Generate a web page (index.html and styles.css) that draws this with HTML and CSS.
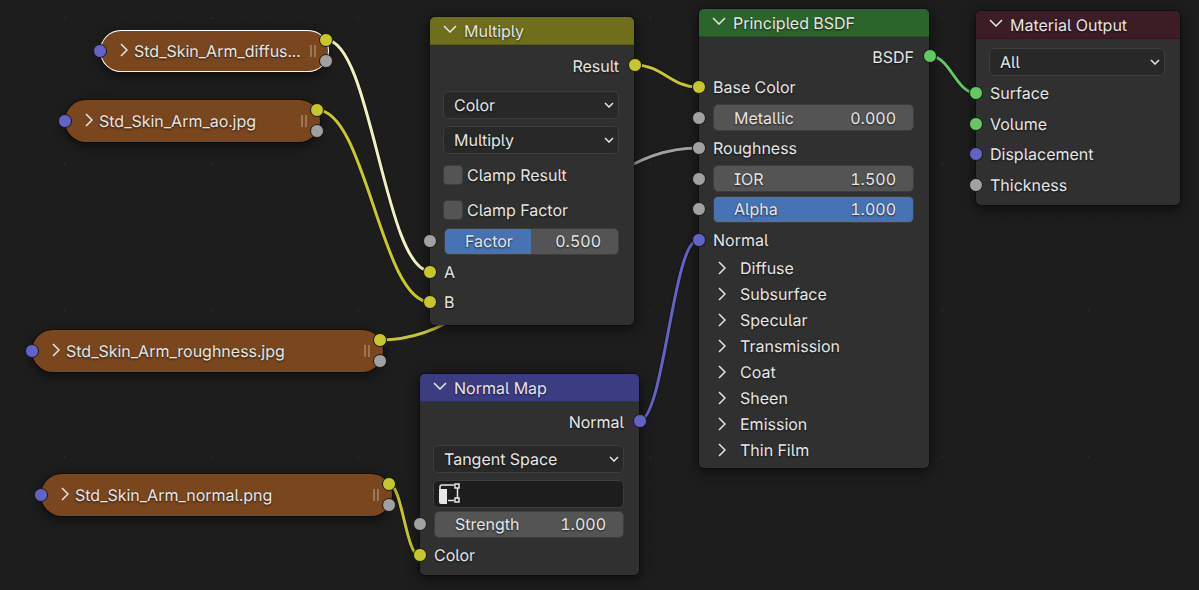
FILE: index.html
```html
<!DOCTYPE html>
<html lang="en">
<head>
<meta charset="utf-8">
<title>Shader Editor</title>
<link rel="stylesheet" href="styles.css">
</head>
<body>
<svg class="defs" aria-hidden="true">
  <symbol id="down" viewBox="0 0 14 8"><path d="M1 1l6 6 6-6"/></symbol>
  <symbol id="right" viewBox="0 0 8 14"><path d="M1 1l6 6-6 6"/></symbol>
  <symbol id="caret" viewBox="0 0 10 6"><path d="M1 1l4 4 4-4"/></symbol>
</svg>
<main class="canvas">
  <svg class="backdrop" aria-hidden="true">
    <defs>
      <pattern id="minor" x="6" y="18" width="29.25" height="29.25" patternUnits="userSpaceOnUse"><rect width="1" height="1" fill="#242424"/></pattern>
      <pattern id="major" x="64" y="17" width="146.25" height="146.25" patternUnits="userSpaceOnUse"><rect width="2" height="2" fill="#272727"/></pattern>
      <linearGradient id="fade" gradientUnits="userSpaceOnUse" x1="380" y1="0" x2="698" y2="0"><stop offset=".3" stop-color="#c7c729"/><stop offset=".8" stop-color="#a1a1a1"/></linearGradient>
    </defs>
    <rect width="100%" height="100%" fill="url(#minor)"/>
    <rect width="100%" height="100%" fill="url(#major)"/>
    <g class="link-edges">
      <path d="M326 40C371 40 385 271 430 271"/>
      <path d="M317 110C366 110 381 302 430 302"/>
      <path d="M380 340C515 340 563 148 698 148"/>
      <path d="M389 484C402 484 406 555 419 555"/>
      <path d="M635 65C662 65 671 87 698 87"/>
      <path d="M639 421C664 421 673 240 698 240"/>
      <path d="M930 56C950 56 956 93 976 93"/>
    </g>
    <g class="links">
      <path stroke="#f0f0c0" d="M326 40C371 40 385 271 430 271"/>
      <path stroke="#c7c729" d="M317 110C366 110 381 302 430 302"/>
      <path stroke="url(#fade)" d="M380 340C515 340 563 148 698 148"/>
      <path stroke="#c7c729" d="M389 484C402 484 406 555 419 555"/>
      <path stroke="#c7c729" d="M635 65C662 65 671 87 698 87"/>
      <path stroke="#6363c7" d="M639 421C664 421 673 240 698 240"/>
      <path stroke="#63c763" d="M930 56C950 56 956 93 976 93"/>
    </g>
  </svg>

  <article class="pill pill-diffuse selected">
    <i class="socket vector in"></i>
    <button class="pill-title"><svg class="right"><use href="#right"/></svg><span>Std_Skin_Arm_diffus...</span></button>
    <span class="grip"></span>
    <span class="outs"><i class="socket color"></i><i class="socket value"></i></span>
  </article>
  <article class="pill pill-ao">
    <i class="socket vector in"></i>
    <button class="pill-title"><svg class="right"><use href="#right"/></svg><span>Std_Skin_Arm_ao.jpg</span></button>
    <span class="grip"></span>
    <span class="outs"><i class="socket color"></i><i class="socket value"></i></span>
  </article>
  <article class="pill pill-roughness">
    <i class="socket vector in"></i>
    <button class="pill-title"><svg class="right"><use href="#right"/></svg><span>Std_Skin_Arm_roughness.jpg</span></button>
    <span class="grip"></span>
    <span class="outs"><i class="socket color"></i><i class="socket value"></i></span>
  </article>
  <article class="pill pill-normal">
    <i class="socket vector in"></i>
    <button class="pill-title"><svg class="right"><use href="#right"/></svg><span>Std_Skin_Arm_normal.png</span></button>
    <span class="grip"></span>
    <span class="outs"><i class="socket color"></i><i class="socket value"></i></span>
  </article>

  <article class="node node-multiply">
    <button class="header"><svg class="down"><use href="#down"/></svg><span>Multiply</span></button>
    <div class="row output">Result<i class="socket color out"></i></div>
    <div class="stack">
      <label class="dropdown"><select aria-label="Data type"><option>Color</option></select><svg class="caret"><use href="#caret"/></svg></label>
      <label class="dropdown"><select aria-label="Blending mode"><option>Multiply</option></select><svg class="caret"><use href="#caret"/></svg></label>
      <label class="check"><input type="checkbox">Clamp Result</label>
      <label class="check"><input type="checkbox">Clamp Factor</label>
    </div>
    <div class="sockets">
      <div class="row"><i class="socket value in"></i><label class="field half"><span>Factor</span><input type="text" value="0.500"></label></div>
      <div class="row"><i class="socket color in"></i>A</div>
      <div class="row"><i class="socket color in"></i>B</div>
    </div>
  </article>

  <article class="node node-normal-map">
    <button class="header"><svg class="down"><use href="#down"/></svg><span>Normal Map</span></button>
    <div class="row output">Normal<i class="socket vector out"></i></div>
    <div class="stack">
      <label class="dropdown"><select aria-label="Space"><option>Tangent Space</option></select><svg class="caret"><use href="#caret"/></svg></label>
      <label class="picker">
        <svg class="uv" viewBox="0 0 22 22"><path class="solid" d="M0 6h8v15H2a2 2 0 0 1-2-2z"/><path d="M1 6V4a2 2 0 0 1 2-2h12M18.500 5v11M9 17.500h6"/><path d="M16 1h4v4h-4zM16 15h4v4h-4z"/></svg>
        <input type="text" aria-label="UV map">
      </label>
    </div>
    <div class="sockets">
      <div class="row"><i class="socket value in"></i><label class="field"><span>Strength</span><input type="text" value="1.000"></label></div>
      <div class="row"><i class="socket color in"></i>Color</div>
    </div>
  </article>

  <article class="node node-principled">
    <button class="header"><svg class="down"><use href="#down"/></svg><span>Principled BSDF</span></button>
    <div class="row output">BSDF<i class="socket shader out"></i></div>
    <div class="sockets">
      <div class="row"><i class="socket color in"></i>Base Color</div>
      <div class="row"><i class="socket value in"></i><label class="field"><span>Metallic</span><input type="text" value="0.000"></label></div>
      <div class="row"><i class="socket value in"></i>Roughness</div>
      <div class="row"><i class="socket value in"></i><label class="field"><span>IOR</span><input type="text" value="1.500"></label></div>
      <div class="row"><i class="socket value in"></i><label class="field full"><span>Alpha</span><input type="text" value="1.000"></label></div>
      <div class="row"><i class="socket vector in"></i>Normal</div>
    </div>
    <div class="panels">
      <button class="panel"><svg class="right"><use href="#right"/></svg>Diffuse</button>
      <button class="panel"><svg class="right"><use href="#right"/></svg>Subsurface</button>
      <button class="panel"><svg class="right"><use href="#right"/></svg>Specular</button>
      <button class="panel"><svg class="right"><use href="#right"/></svg>Transmission</button>
      <button class="panel"><svg class="right"><use href="#right"/></svg>Coat</button>
      <button class="panel"><svg class="right"><use href="#right"/></svg>Sheen</button>
      <button class="panel"><svg class="right"><use href="#right"/></svg>Emission</button>
      <button class="panel"><svg class="right"><use href="#right"/></svg>Thin Film</button>
    </div>
  </article>

  <article class="node node-output">
    <button class="header"><svg class="down"><use href="#down"/></svg><span>Material Output</span></button>
    <div class="stack">
      <label class="dropdown"><select aria-label="Target"><option>All</option></select><svg class="caret"><use href="#caret"/></svg></label>
    </div>
    <div class="sockets">
      <div class="row"><i class="socket shader in"></i>Surface</div>
      <div class="row"><i class="socket shader in"></i>Volume</div>
      <div class="row"><i class="socket vector in"></i>Displacement</div>
      <div class="row"><i class="socket value in"></i>Thickness</div>
    </div>
  </article>
</main>
</body>
</html>
```
FILE: styles.css
```css
* { box-sizing: border-box; }

body {
  margin: 0;
  background: #1d1d1d;
  color: #e6e6e6;
  font: 16px/20px Inter, "Liberation Sans", sans-serif;
  font-feature-settings: "cv05", "cv08", "tnum";
  text-rendering: geometricPrecision;
  text-shadow: 0 1px 2px rgba(0, 0, 0, .7);
}

button, input, select {
  margin: 0;
  padding: 0;
  border: 0;
  background: none;
  color: inherit;
  font: inherit;
  font-feature-settings: inherit;
  text-rendering: inherit;
  text-shadow: inherit;
  text-align: left;
  appearance: none;
}

.defs { position: absolute; width: 0; height: 0; }
.canvas { position: relative; min-height: 100vh; overflow: hidden; }
.backdrop { position: absolute; inset: 0; width: 100%; height: 100%; }
.links, .link-edges { fill: none; stroke-width: 3px; }
.link-edges { stroke: #151515; stroke-width: 5px; }

.down, .right, .caret { flex: none; fill: none; stroke: #e6e6e6; stroke-width: 1.5px; overflow: visible; }
.down { width: 14px; height: 8px; }
.right { width: 8px; height: 14px; }
.caret { width: 10px; height: 6px; }

/* Sockets */
.socket { display: block; width: 14px; height: 14px; border: 1px solid #171717; border-radius: 50%; }
.socket.in { position: absolute; left: -7px; top: 50%; margin-top: -7px; }
.socket.out { position: absolute; right: -8px; top: 50%; margin-top: -8px; }
.color { background: #c7c729; }
.value { background: #a1a1a1; }
.vector { background: #6363c7; }
.shader { background: #63c763; }

/* Collapsed nodes */
.pill {
  position: absolute;
  display: flex;
  align-items: center;
  height: 42px;
  padding: 0 13px 0 20px;
  border-radius: 21px;
  background: #79461d;
  box-shadow: 0 0 0 1px rgba(0, 0, 0, .35), 0 3px 12px rgba(0, 0, 0, .6);
}
.pill.selected { box-shadow: inset 0 0 0 1px #fff, 0 3px 12px rgba(0, 0, 0, .6); }
.pill-title { display: flex; align-items: center; flex: 1; gap: 6px; }
.pill-title svg { margin-bottom: 3px; }
.grip { width: 6px; height: 12px; border: solid #9a7657; border-width: 0 2px; }
.outs { position: absolute; right: -4px; top: 3px; display: grid; gap: 7px; }
.pill-diffuse { left: 100px; top: 30px; width: 229px; }
.pill-ao { left: 65px; top: 100px; width: 255px; }
.pill-roughness { left: 32px; top: 330px; width: 351px; }
.pill-normal { left: 41px; top: 474px; width: 351px; }

/* Expanded nodes */
.node {
  position: absolute;
  display: flex;
  flex-direction: column;
  padding-bottom: 5px;
  border-radius: 5px;
  background: #303030;
  box-shadow: 0 0 0 1px rgba(0, 0, 0, .25), 0 3px 14px rgba(0, 0, 0, .65);
}
.node-multiply { left: 430px; top: 17px; width: 204px; padding-bottom: 8px; }
.node-normal-map { left: 420px; top: 374px; width: 219px; }
.node-principled { left: 699px; top: 9px; width: 230px; }
.node-output { left: 976px; top: 11px; width: 204px; }

.header {
  display: flex;
  align-items: center;
  gap: 7px;
  height: 28px;
  padding-left: 13px;
  border-bottom: 1px solid rgba(0, 0, 0, .2);
  border-radius: 5px 5px 0 0;
}
.header svg { margin-bottom: 4px; }
.node-multiply .header { background: #6e6e1d; }
.node-normal-map .header { background: #3c3c83; }
.node-principled .header { background: #2b652b; }
.node-output .header { background: #3c1d26; }

.row { position: relative; display: flex; align-items: center; height: 30px; padding: 0 15px 0 14px; }
.row:nth-child(even) { height: 31px; }
.node .output { justify-content: flex-end; height: 30px; margin-top: 5px; }
.node-multiply .output { margin-top: 6px; }

.stack { display: flex; flex-direction: column; gap: 7px; padding: 9px 15px 2px 13px; }
.node-multiply .stack { padding-top: 10px; }
.node-normal-map .stack { padding-top: 8px; padding-bottom: 1px; }
.dropdown, .picker {
  display: flex;
  align-items: center;
  height: 28px;
  padding: 0 4px 0 10px;
  border: 1px solid #3d3d3d;
  border-radius: 5px;
  background: #282828;
}
.dropdown select { flex: 1; min-width: 0; height: 26px; }
.picker { gap: 6px; padding-left: 5px; background: #1d1d1d; }
.picker input { flex: 1; min-width: 0; }
.uv { width: 22px; height: 22px; fill: none; stroke: #e6e6e6; stroke-width: 1.5px; }
.uv .solid { fill: #e6e6e6; stroke: none; }

.check { display: flex; align-items: center; gap: 4px; height: 28px; }
.check input { width: 20px; height: 20px; border: 1px solid #3d3d3d; border-radius: 4px; background: #545454; }
.check input:checked { background: #4772b3; }

.field {
  display: flex;
  align-items: center;
  flex: 1;
  min-width: 0;
  height: 27px;
  padding: 0 17px 0 20px;
  border: 1px solid #3d3d3d;
  border-radius: 5px;
  background: #545454;
}
.field input { flex: 1; width: 0; min-width: 0; text-align: right; }
.field.half { background: linear-gradient(to right, #4772b3 50%, #545454 50%); }
.field.full { background: #4772b3; }

.panels { display: flex; flex-direction: column; }
.panel { display: flex; align-items: center; gap: 14px; height: 26px; padding-left: 19px; }
```
